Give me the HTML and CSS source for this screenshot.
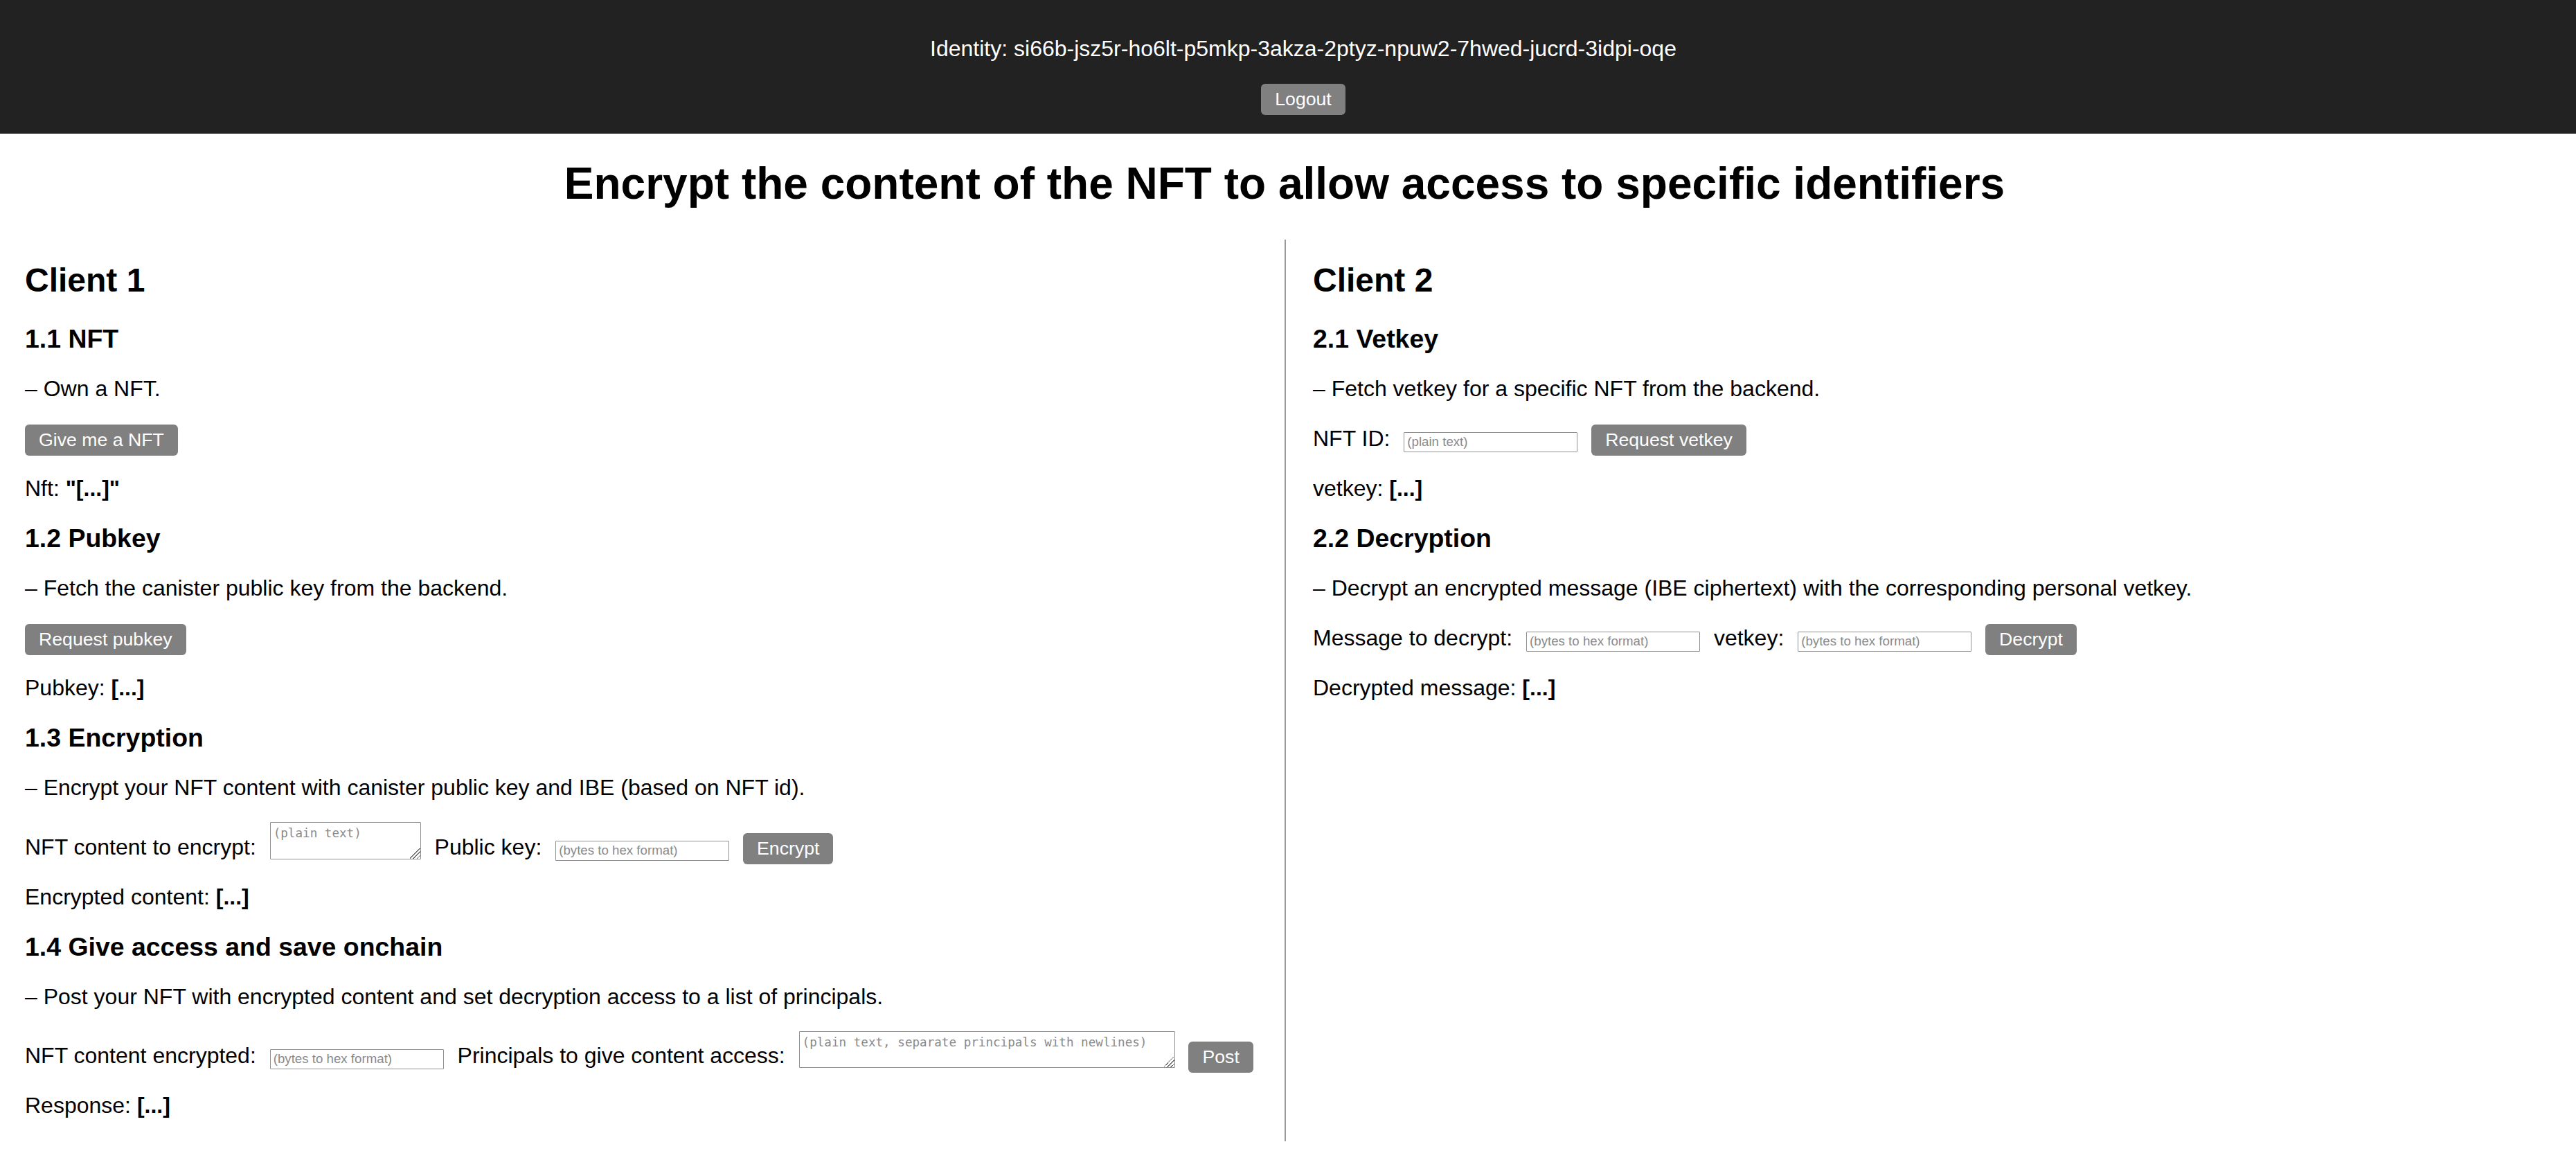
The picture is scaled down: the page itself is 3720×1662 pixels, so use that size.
FILE: index.html
```html
<!DOCTYPE html>
<html lang="en">
<head>
<meta charset="utf-8">
<title>NFT encryption</title>
<link rel="stylesheet" href="styles.css">
</head>
<body>
<header class="topbar">
  <p class="identity">Identity: si66b-jsz5r-ho6lt-p5mkp-3akza-2ptyz-npuw2-7hwed-jucrd-3idpi-oqe</p>
  <div class="logout-wrap"><button class="btn">Logout</button></div>
</header>
<main class="page">
  <h1 class="title">Encrypt the content of the NFT to allow access to specific identifiers</h1>
  <div class="clients">
    <section class="client client-left">
      <h2 class="client-title">Client 1</h2>

      <h3 class="step-title">1.1 NFT</h3>
      <p class="line">– Own a NFT.</p>
      <div class="row"><button class="btn">Give me a NFT</button></div>
      <p class="line">Nft: <strong>"[...]"</strong></p>

      <h3 class="step-title">1.2 Pubkey</h3>
      <p class="line">– Fetch the canister public key from the backend.</p>
      <div class="row"><button class="btn">Request pubkey</button></div>
      <p class="line">Pubkey: <strong>[...]</strong></p>

      <h3 class="step-title">1.3 Encryption</h3>
      <p class="line">– Encrypt your NFT content with canister public key and IBE (based on NFT id).</p>
      <div class="row form">NFT content to encrypt: <textarea class="area area-small" placeholder="(plain text)"></textarea> Public key: <input class="field" type="text" placeholder="(bytes to hex format)"> <button class="btn">Encrypt</button></div>
      <p class="line">Encrypted content: <strong>[...]</strong></p>

      <h3 class="step-title">1.4 Give access and save onchain</h3>
      <p class="line">– Post your NFT with encrypted content and set decryption access to a list of principals.</p>
      <div class="row form">NFT content encrypted: <input class="field" type="text" placeholder="(bytes to hex format)"> Principals to give content access: <textarea class="area area-wide" placeholder="(plain text, separate principals with newlines)"></textarea> <button class="btn">Post</button></div>
      <p class="line">Response: <strong>[...]</strong></p>
    </section>

    <section class="client client-right">
      <h2 class="client-title">Client 2</h2>

      <h3 class="step-title">2.1 Vetkey</h3>
      <p class="line">– Fetch vetkey for a specific NFT from the backend.</p>
      <div class="row">NFT ID: <input class="field" type="text" placeholder="(plain text)"> <button class="btn">Request vetkey</button></div>
      <p class="line">vetkey: <strong>[...]</strong></p>

      <h3 class="step-title">2.2 Decryption</h3>
      <p class="line">– Decrypt an encrypted message (IBE ciphertext) with the corresponding personal vetkey.</p>
      <div class="row">Message to decrypt: <input class="field" type="text" placeholder="(bytes to hex format)"> vetkey: <input class="field" type="text" placeholder="(bytes to hex format)"> <button class="btn">Decrypt</button></div>
      <p class="line">Decrypted message: <strong>[...]</strong></p>
    </section>
  </div>
</main>
</body>
</html>
```
FILE: styles.css
```css
html, body {
  margin: 0;
  padding: 0;
  background: #ffffff;
}

body {
  font-family: "Liberation Sans", Arial, Helvetica, sans-serif;
  font-size: 32px;
  color: #000000;
}

/* header */
.topbar {
  background: #222222;
  color: #ffffff;
  height: 193px;
  box-sizing: border-box;
  padding: 52px 0 0 44px;
  text-align: center;
}

.identity {
  margin: 0;
  line-height: 37px;
}

.logout-wrap {
  margin-top: 32px;
  height: 45px;
  line-height: 0;
}

.logout-wrap .btn {
  vertical-align: top;
}

/* buttons */
.btn {
  display: inline-block;
  margin: 0;
  padding: 7px 20px;
  border: none;
  border-radius: 6px;
  background: #808080;
  color: #ffffff;
  font-family: "Liberation Sans", Arial, Helvetica, sans-serif;
  font-size: 26.67px;
  line-height: 31px;
  cursor: pointer;
}

/* title */
.title {
  margin: 35px 0 0;
  padding-right: 10px;
  font-size: 64px;
  line-height: 74px;
  font-weight: 700;
  text-align: center;
}

/* columns */
.clients {
  display: grid;
  grid-template-columns: 1855px 1fr;
  margin-top: 44px;
}

.client {
  padding: 31px 0 33px;
}

.client-left {
  padding-left: 36px;
}

.client-right {
  border-left: 2px solid #9a9a9a;
  padding-left: 39px;
}

.client-title {
  margin: 0;
  font-size: 48px;
  line-height: 55px;
  font-weight: 700;
}

.step-title {
  margin: 32px 0 0;
  font-size: 37.44px;
  line-height: 43px;
  font-weight: 700;
}

.client-title + .step-title {
  margin-top: 36px;
}

.line {
  margin: 32px 0 0;
  line-height: 37px;
}

.row {
  margin-top: 33px;
  line-height: 37px;
  white-space: nowrap;
}

.row + .line {
  margin-top: 29px;
}

.row.form {
  margin-top: 31px;
}

.row.form + .line {
  margin-top: 29px;
}

/* form controls */
.field {
  box-sizing: border-box;
  width: 251px;
  height: 29px;
  margin: 0 11px;
  padding: 0 4px;
  border: 1px solid #8f8f8f;
  border-radius: 1px;
  background: #ffffff;
  font-family: "Liberation Sans", Arial, Helvetica, sans-serif;
  font-size: 18.7px;
  color: #000000;
  vertical-align: baseline;
}

.area {
  box-sizing: border-box;
  height: 54px;
  margin: 0 11px;
  padding: 5px 4px 3px;
  border: 1px solid #8f8f8f;
  border-radius: 1px;
  background: #ffffff;
  font-family: "DejaVu Sans Mono", "Liberation Mono", monospace;
  font-size: 17.6px;
  line-height: 21px;
  color: #000000;
  vertical-align: text-bottom;
}

.area::-webkit-resizer {
  background: linear-gradient(135deg,
    transparent 0 44%, #6a6a6a 44% 50%,
    transparent 50% 62%, #6a6a6a 62% 68%,
    transparent 68% 80%, #6a6a6a 80% 86%,
    transparent 86%);
}

.area-small {
  width: 218px;
}

.area-wide {
  width: 543px;
  height: 53px;
}

.field::placeholder,
.area::placeholder {
  color: #8a8a8a;
  opacity: 1;
}
```
